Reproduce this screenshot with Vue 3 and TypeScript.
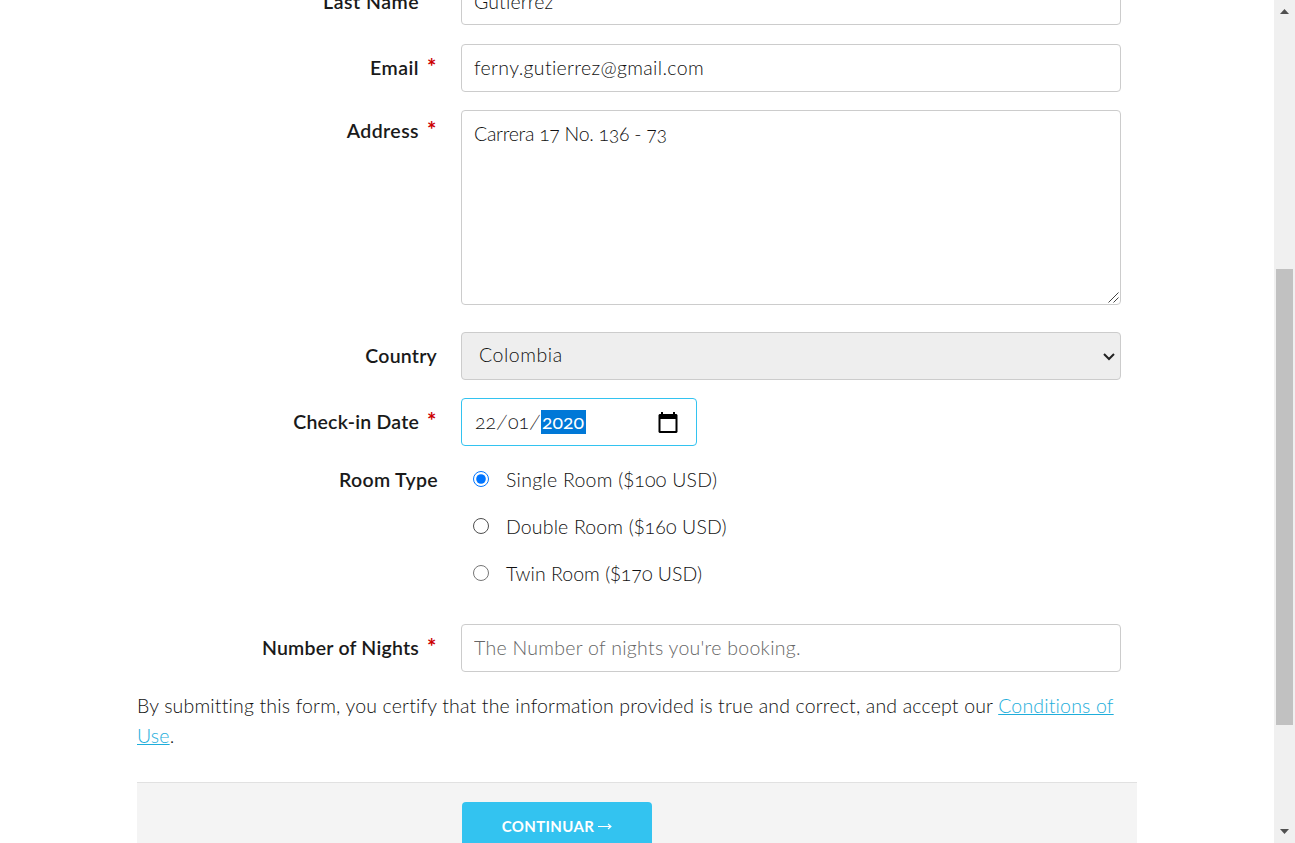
<script setup lang="ts">
import { ref } from 'vue'

interface Room {
  id: string
  name: string
  price: number
}

const rooms: Room[] = [
  { id: 'single', name: 'Single Room', price: 100 },
  { id: 'double', name: 'Double Room', price: 160 },
  { id: 'twin', name: 'Twin Room', price: 170 },
]

const lastName = ref('Gutierrez')
const email = ref('ferny.gutierrez@gmail.com')
const address = ref('Carrera 17 No. 136 - 73')
const country = ref('Colombia')
const room = ref('single')
const nights = ref('')
</script>

<template>
  <div class="viewport">
    <main class="page">
      <form class="form" @submit.prevent>
        <div class="row">
          <label class="label last">Last Name</label>
          <input v-model="lastName" class="field last-name" type="text" spellcheck="false" />
        </div>
        <div class="row email-row">
          <label class="label">Email<span class="req">*</span></label>
          <input v-model="email" class="field email" type="text" spellcheck="false" />
        </div>
        <div class="row address-row">
          <label class="label">Address<span class="req">*</span></label>
          <div class="control">
            <textarea v-model="address" class="field area" spellcheck="false"></textarea>
            <svg class="grip" width="11" height="11" viewBox="0 0 11 11"><path d="M.5 10.500l10-10M5.500 10.500l5-5" fill="none" stroke="#444" stroke-width="1" /></svg>
          </div>
        </div>
        <div class="row country-row">
          <label class="label">Country</label>
          <div class="control">
            <select v-model="country" class="field select">
              <option>Colombia</option>
            </select>
            <svg class="chevron" width="12" height="8" viewBox="0 0 12 8"><path d="M1 1l5 5 5-5" fill="none" stroke="#222" stroke-width="2" /></svg>
          </div>
        </div>
        <div class="row date-row">
          <label class="label">Check-in Date<span class="req">*</span></label>
          <div class="field date">
            <span class="d2">22</span><span class="slash">/</span><span class="d1">01</span><span class="slash">/</span><span class="year">2020</span>
            <svg class="calendar" width="20" height="22" viewBox="0 0 20 22">
              <path d="M3 0h2v2h10V0h2v2h1.500L19.500 3v17l-1 1h-17l-1-1V3l1-1H3zM2.500 7v12h15V7z" fill="#000" fill-rule="evenodd" />
            </svg>
          </div>
        </div>
        <div class="row room-row">
          <label class="label type">Room Type</label>
          <div class="rooms">
            <label v-for="r in rooms" :key="r.id" class="room" :class="r.id">
              <input v-model="room" class="radio" type="radio" name="room" :value="r.id" />
              <span>{{ r.name }} (<span class="currency">$</span>{{ r.price }} USD)</span>
            </label>
          </div>
        </div>
        <div class="row nights-row">
          <label class="label nights-label">Number of Nights<span class="req">*</span></label>
          <input v-model="nights" class="field nights" type="text" placeholder="The Number of nights you're booking." />
        </div>
        <p class="terms">
          By submitting this form, you certify that the information provided is true and correct, and accept our <a href="#">Conditions of<br />Use</a>.
        </p>
        <div class="actions">
          <button class="submit" type="submit">
            <span>CONTINUAR</span>
            <svg width="14" height="8" viewBox="0 0 14 8"><path d="M0 4.500h13M10 2l3 2.500L10 7" fill="none" stroke="#fff" stroke-width="1.100" /></svg>
          </button>
        </div>
      </form>
    </main>
    <aside class="scrollbar">
      <svg class="arrow" width="9" height="5" viewBox="0 0 9 5"><path d="M4.500 0L9 5H0z" fill="#505050" /></svg>
      <div class="thumb"></div>
      <svg class="arrow" width="9" height="5" viewBox="0 0 9 5"><path d="M0 0h9L4.500 5z" fill="#505050" /></svg>
    </aside>
  </div>
</template>

<style>
body {
  margin: 0;
  overflow: hidden;
}
</style>

<style scoped>
.viewport {
  display: flex;
  height: 843px;
  overflow: hidden;
  background: #fff;
  color: #111;
  font-family: Lato, sans-serif;
  font-size: 19.5px;
  font-weight: 300;
  line-height: 30px;
  letter-spacing: 0.17px;
  font-variant-numeric: oldstyle-nums;
  font-variant-ligatures: none;
}
.page {
  flex: 1;
  height: 843px;
  overflow: hidden;
}
.form {
  width: 1000px;
  margin: -23px 0 0 137px;
}
.row {
  display: grid;
  grid-template-columns: 300px 660px;
  column-gap: 24px;
  align-items: start;
}
.label {
  display: flex;
  justify-content: flex-end;
  color: #1a1a1a;
  line-height: 48px;
  font-weight: 600;
  letter-spacing: 0.22px;
  white-space: nowrap;
}
.last {
  padding: 2px 18px 0 0;
  line-height: 46px;
  letter-spacing: 0.5px;
}
.email-row .label { letter-spacing: 0.5px; }
.type {
  margin-right: -1px;
  letter-spacing: 0.35px;
}
.req {
  width: 18px;
  box-sizing: border-box;
  padding-left: 8px;
  color: #c00;
  font-weight: 700;
  font-size: 22px;
  line-height: 46px;
  letter-spacing: 0;
}
.control { position: relative; }
.field {
  box-sizing: border-box;
  width: 660px;
  height: 48px;
  margin: 0;
  padding: 0 12px 1px;
  border: 1px solid #ccc;
  border-radius: 4px;
  outline: none;
  background: #fff;
  color: #111;
  font: inherit;
  letter-spacing: 0.28px;
  font-variant-numeric: oldstyle-nums;
  font-variant-ligatures: none;
}
.last-name { padding-top: 2px; letter-spacing: 0.13px; }
.email-row { margin-top: 19px; }
.address-row { margin-top: 18px; }
.address-row .label { line-height: 42px; letter-spacing: 0.42px; }
.address-row .req { line-height: 40px; }
.label .req { letter-spacing: 0; }
.email { letter-spacing: 0.34px; }
.area {
  display: block;
  height: 195px;
  padding: 8px 12px;
  letter-spacing: -0.29px;
  resize: none;
}
.grip {
  position: absolute;
  right: 2px;
  bottom: 2px;
}
.country-row { margin-top: 27px; }
.country-row .label { line-height: 47px; }
.select {
  display: block;
  padding: 0 17px 3px;
  appearance: none;
  background: #eee;
  letter-spacing: 0.55px;
}
.chevron {
  position: absolute;
  top: 21px;
  right: 6px;
}
.date-row { margin-top: 18px; }
.date {
  display: flex;
  align-items: center;
  width: 236px;
  padding: 0 18px 0 13px;
  border-color: #33c3f0;
  letter-spacing: 0;
}
.slash {
  width: 12px;
  text-align: center;
  transform: skewX(-12deg);
}
.d1 { width: 21px; }
.d2 { width: 21px; }
.year {
  display: block;
  box-sizing: border-box;
  width: 45px;
  height: 24px;
  padding-left: 1px;
  line-height: 24px;
  background: #0078d7;
  color: #fff;
  font-weight: 400;
}
.calendar {
  margin: 2px 0 0 auto;
}
.room-row { margin-top: 10px; }
.room {
  display: flex;
  align-items: center;
  height: 47px;
}
.single { letter-spacing: 0.26px; }
.double { letter-spacing: 0.16px; }
.twin { letter-spacing: 0.04px; }
.currency { font-variant-numeric: lining-nums; }
.radio {
  width: 16px;
  height: 16px;
  margin: 0 17px 2px 12px;
}
.double .radio:not(:checked) {
  box-sizing: border-box;
  appearance: none;
  border: 1px solid #4f4f4f;
  border-radius: 50%;
}
.nights-row { margin-top: 27px; }
.nights::placeholder {
  color: #666;
  opacity: 1;
}
.terms {
  margin: 19px 0 0;
  white-space: nowrap;
}
.terms a { color: #1eaedb; }
.actions {
  height: 80px;
  margin-top: 31px;
  padding: 19px 0 0 325px;
  border-top: 1px solid #e1e1e1;
  background: #f4f4f4;
}
.submit {
  display: flex;
  align-items: center;
  justify-content: center;
  gap: 4px;
  width: 190px;
  height: 48px;
  padding: 0 0 1px;
  border: 0;
  border-radius: 4px;
  background: #33c3f0;
  color: #fff;
  font: 700 15px Lato, sans-serif;
  letter-spacing: 0.35px;
}
.scrollbar {
  display: flex;
  flex-direction: column;
  align-items: center;
  box-sizing: border-box;
  width: 21px;
  height: 843px;
  padding: 9px 0;
  background: #f0f0f0;
}
.thumb {
  width: 17px;
  height: 456px;
  margin: 255px 0 auto;
  background: #c1c1c1;
}
</style>
